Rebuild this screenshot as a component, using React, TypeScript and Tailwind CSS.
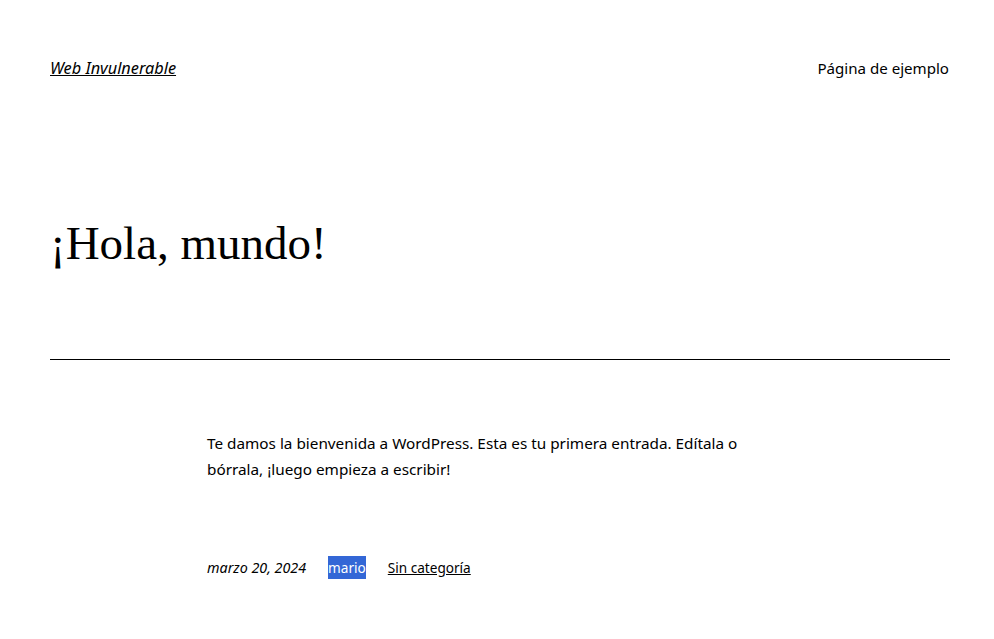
export default function App() {
  const sans = { fontFamily: '"Noto Sans", "Open Sans", sans-serif' };
  return (
    <div className="min-h-[639px] w-full bg-white text-black" style={sans}>
      <div className="w-[900px] ml-[50px]">
        <header className="flex items-center justify-between pt-[56px] h-[80px]">
          <a href="#" className="italic underline text-[16.3px] leading-[24px] text-black">Web Invulnerable</a>
          <nav className="text-[15.1px] leading-[24px] mr-[1px]">Página de ejemplo</nav>
        </header>
        <h1
          className="mt-[131px] text-[47px] leading-[64px] font-light"
          style={{ fontFamily: '"Liberation Serif", "DejaVu Serif", serif' }}
        >
          ¡Hola, mundo!
        </h1>
        <hr className="mt-[84px] border-0 border-t border-black" />
        <div className="w-[586px] mx-auto mt-[70px]">
          <p className="text-[15.3px] leading-[26px]">
            Te damos la bienvenida a WordPress. Esta es tu primera entrada. Edítala o bórrala, ¡luego empieza a escribir!
          </p>
          <div className="flex items-center gap-[22px] mt-[74px] text-[13.6px] leading-[23px]">
            <span className="italic text-[14.3px]">marzo 20, 2024</span>
            <span className="bg-[#3367d6] text-white">mario</span>
            <a href="#" className="underline text-black">Sin categoría</a>
          </div>
        </div>
      </div>
    </div>
  );
}
